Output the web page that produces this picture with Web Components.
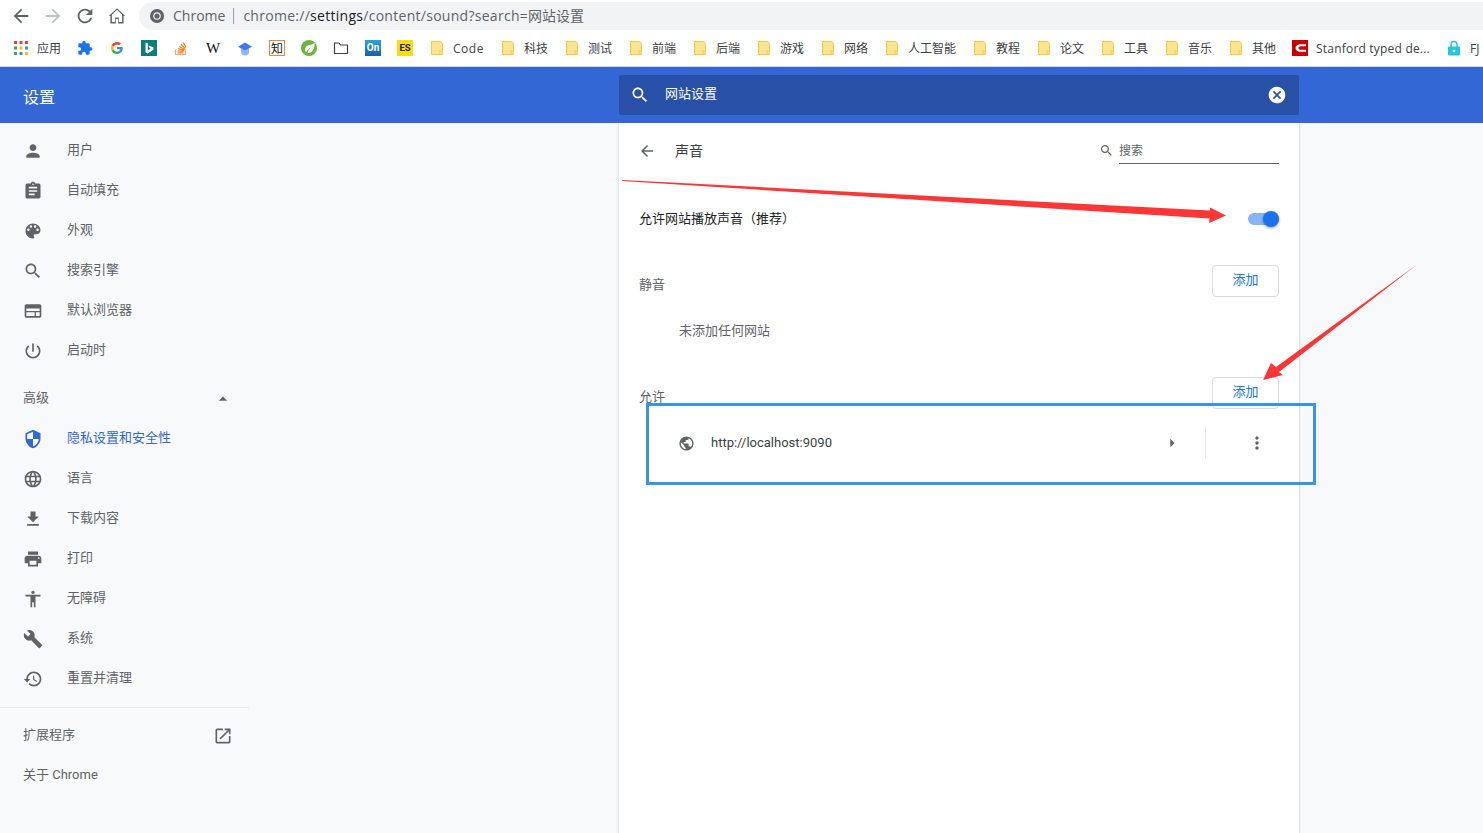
<!DOCTYPE html>
<html lang="zh-CN"><head><meta charset="utf-8"><title>设置</title>
<style>
html,body{margin:0;padding:0;background:#f8f9fa}
body{width:1483px;height:833px;overflow:hidden;position:relative;font-family:Roboto,"Noto Sans CJK SC",sans-serif;font-size:13px;color:#5f6368}
</style></head><body>
<x-toolbar></x-toolbar>
<x-bookmarks>
  <x-bm icon="apps">应用</x-bm><x-bm icon="ext"></x-bm><x-bm icon="g"></x-bm><x-bm icon="bing"></x-bm><x-bm icon="so"></x-bm><x-bm icon="w"></x-bm><x-bm icon="hat"></x-bm><x-bm icon="zhi"></x-bm><x-bm icon="spring"></x-bm><x-bm icon="dir"></x-bm><x-bm icon="on"></x-bm><x-bm icon="es"></x-bm>
  <x-bm style="letter-spacing:.5px">Code</x-bm><x-bm>科技</x-bm><x-bm>测试</x-bm><x-bm>前端</x-bm><x-bm>后端</x-bm><x-bm>游戏</x-bm><x-bm>网络</x-bm><x-bm>人工智能</x-bm><x-bm>教程</x-bm><x-bm>论文</x-bm><x-bm>工具</x-bm><x-bm>音乐</x-bm><x-bm>其他</x-bm>
  <x-bm icon="c" style="letter-spacing:.2px">Stanford typed de...</x-bm><x-bm icon="lock">FJ</x-bm>
</x-bookmarks>
<x-settings-header></x-settings-header>
<x-layout>
  <x-sidebar slot="side">
    <x-nav icon="person">用户</x-nav><x-nav icon="assign">自动填充</x-nav><x-nav icon="palette">外观</x-nav><x-nav icon="search">搜索引擎</x-nav><x-nav icon="web">默认浏览器</x-nav><x-nav icon="power">启动时</x-nav>
    <x-nav plain trail="caret" style="margin-top:8px">高级</x-nav>
    <x-nav icon="shield" active>隐私设置和安全性</x-nav><x-nav icon="language">语言</x-nav><x-nav icon="download">下载内容</x-nav><x-nav icon="print">打印</x-nav><x-nav icon="access">无障碍</x-nav><x-nav icon="build">系统</x-nav><x-nav icon="restore">重置并清理</x-nav>
    <x-rule></x-rule>
    <x-nav plain trail="open">扩展程序</x-nav><x-nav plain>关于 Chrome</x-nav>
  </x-sidebar>
  <x-card slot="main">
    <x-subpage></x-subpage>
    <x-toggle-row>允许网站播放声音<span style="font-family:'Noto Sans CJK TC',sans-serif">（</span>推荐<span style="font-family:'Noto Sans CJK TC',sans-serif">）</span></x-toggle-row>
    <x-section>静音</x-section>
    <x-empty>未添加任何网站</x-empty>
    <x-section>允许</x-section>
    <x-site>http://localhost:9090</x-site>
  </x-card>
</x-layout>
<x-annotations></x-annotations>
<script>
const P={
person:'M12 12c2.21 0 4-1.79 4-4s-1.79-4-4-4-4 1.79-4 4 1.79 4 4 4zm0 2c-2.67 0-8 1.34-8 4v2h16v-2c0-2.66-5.33-4-8-4z',
assign:'M19 3h-4.18C14.4 1.84 13.3 1 12 1c-1.3 0-2.4.84-2.82 2H5c-1.1 0-2 .9-2 2v14c0 1.1.9 2 2 2h14c1.1 0 2-.9 2-2V5c0-1.1-.9-2-2-2zm-7 0c.55 0 1 .45 1 1s-.45 1-1 1-1-.45-1-1 .45-1 1-1zm2 14H7v-2h7v2zm3-4H7v-2h10v2zm0-4H7V7h10v2z',
palette:'M12 3c-4.97 0-9 4.03-9 9s4.03 9 9 9c.83 0 1.5-.67 1.5-1.5 0-.39-.15-.74-.39-1.01-.23-.26-.38-.61-.38-.99 0-.83.67-1.5 1.5-1.5H16c2.76 0 5-2.24 5-5 0-4.42-4.03-8-9-8zm-5.5 9c-.83 0-1.5-.67-1.5-1.5S5.67 9 6.5 9 8 9.67 8 10.5 7.33 12 6.5 12zm3-4C8.67 8 8 7.33 8 6.5S8.67 5 9.5 5s1.5.67 1.5 1.5S10.33 8 9.5 8zm5 0c-.83 0-1.5-.67-1.5-1.5S13.67 5 14.5 5s1.5.67 1.5 1.5S15.33 8 14.5 8zm3 4c-.83 0-1.5-.67-1.5-1.5S16.67 9 17.5 9s1.5.67 1.5 1.5-.67 1.5-1.5 1.5z',
search:'M15.5 14h-.79l-.28-.27C15.41 12.59 16 11.11 16 9.5 16 5.91 13.09 3 9.5 3S3 5.91 3 9.5 5.91 16 9.5 16c1.61 0 3.09-.59 4.23-1.57l.27.28v.79l5 4.99L20.49 19l-4.99-5zm-6 0C7.01 14 5 11.99 5 9.5S7.01 5 9.5 5 14 7.01 14 9.5 11.99 14 9.5 14z',
web:'M20 4H4c-1.1 0-2 .9-2 2v12c0 1.1.9 2 2 2h16c1.1 0 2-.9 2-2V6c0-1.1-.9-2-2-2zM4 9h16v3H4V9zm0 4.5h10V18H4v-4.5zm11.5 0H20V18h-4.5v-4.5z',
power:'M13 3h-2v10h2V3zm4.83 2.17l-1.42 1.42C17.99 7.86 19 9.81 19 12c0 3.87-3.13 7-7 7s-7-3.13-7-7c0-2.19 1.01-4.14 2.58-5.42L6.17 5.17C4.23 6.82 3 9.26 3 12c0 4.97 4.03 9 9 9s9-4.03 9-9c0-2.74-1.23-5.18-3.17-6.83z',
shield:'M12 1L3 5v6c0 5.55 3.84 10.74 9 12 5.16-1.26 9-6.45 9-12V5l-9-4zm0 10.99h7c-.53 4.12-3.28 7.79-7 8.94V12H5V6.3l7-3.11v8.8z',
language:'M11.99 2C6.47 2 2 6.48 2 12s4.47 10 9.99 10C17.52 22 22 17.52 22 12S17.52 2 11.99 2zm6.93 6h-2.95c-.32-1.25-.78-2.45-1.38-3.56 1.84.63 3.37 1.91 4.33 3.56zM12 4.04c.83 1.2 1.48 2.53 1.91 3.96h-3.82c.43-1.43 1.08-2.76 1.91-3.96zM4.26 14C4.1 13.36 4 12.69 4 12s.1-1.36.26-2h3.38c-.08.66-.14 1.32-.14 2 0 .68.06 1.34.14 2H4.26zm.82 2h2.95c.32 1.25.78 2.45 1.38 3.56-1.84-.63-3.37-1.9-4.33-3.56zm2.95-8H5.08c.96-1.66 2.49-2.93 4.33-3.56C8.81 5.55 8.35 6.75 8.03 8zM12 19.96c-.83-1.2-1.48-2.53-1.91-3.96h3.82c-.43 1.43-1.08 2.76-1.91 3.96zM14.34 14H9.66c-.09-.66-.16-1.32-.16-2 0-.68.07-1.35.16-2h4.68c.09.65.16 1.32.16 2 0 .68-.07 1.34-.16 2zm.25 5.56c.6-1.11 1.06-2.31 1.38-3.56h2.95c-.96 1.65-2.49 2.93-4.33 3.56zM16.36 14c.08-.66.14-1.32.14-2 0-.68-.06-1.34-.14-2h3.38c.16.64.26 1.31.26 2s-.1 1.36-.26 2h-3.38z',
download:'M19 9h-4V3H9v6H5l7 7 7-7zM5 18v2h14v-2H5z',
print:'M19 8H5c-1.66 0-3 1.34-3 3v6h4v4h12v-4h4v-6c0-1.66-1.34-3-3-3zm-3 11H8v-5h8v5zm3-7c-.55 0-1-.45-1-1s.45-1 1-1 1 .45 1 1-.45 1-1 1zm-1-9H6v4h12V3z',
access:'M12 2c1.1 0 2 .9 2 2s-.9 2-2 2-2-.9-2-2 .9-2 2-2zm9 7h-6v13h-2v-6h-2v6H9V9H3V7h18v2z',
build:'M22.7 19l-9.1-9.1c.9-2.3.4-5-1.5-6.9-2-2-5-2.4-7.4-1.3L9 6 6 9 1.6 4.7C.4 7.1.9 10.1 2.9 12.1c1.9 1.9 4.6 2.4 6.9 1.5l9.1 9.1c.4.4 1 .4 1.4 0l2.3-2.3c.5-.4.5-1.1.1-1.4z',
restore:'M13 3c-4.97 0-9 4.03-9 9H1l3.89 3.89.07.14L9 12H6c0-3.87 3.13-7 7-7s7 3.13 7 7-3.13 7-7 7c-1.93 0-3.68-.79-4.94-2.06l-1.42 1.42C8.27 19.99 10.51 21 13 21c4.97 0 9-4.03 9-9s-4.03-9-9-9zm-1 5v5l4.28 2.54.72-1.21-3.5-2.08V8H12z',
open:'M19 19H5V5h7V3H5c-1.11 0-2 .9-2 2v14c0 1.1.89 2 2 2h14c1.1 0 2-.9 2-2v-7h-2v7zM14 3v2h3.59l-9.83 9.83 1.41 1.41L19 6.41V10h2V3h-7z',
caret:'M7 14l5-5 5 5z',
right:'M10 7l5 5-5 5z',
pub:'M12 2C6.48 2 2 6.48 2 12s4.48 10 10 10 10-4.48 10-10S17.52 2 12 2zm-1 17.93c-3.95-.49-7-3.85-7-7.93 0-.62.08-1.21.21-1.79L9 15v1c0 1.1.9 2 2 2v1.93zm6.9-2.54c-.26-.81-1-1.39-1.9-1.39h-1v-3c0-.55-.45-1-1-1H8v-2h2c.55 0 1-.45 1-1V7h2c1.1 0 2-.9 2-2v-.41c2.93 1.19 5 4.06 5 7.41 0 2.08-.8 3.97-2.1 5.39z',
back:'M20 11H7.83l5.59-5.59L12 4l-8 8 8 8 1.41-1.41L7.83 13H20v-2z',
forward:'M12 4l-1.41 1.41L16.17 11H4v2h12.17l-5.58 5.59L12 20l8-8z',
cancel:'M12 2C6.47 2 2 6.47 2 12s4.47 10 10 10 10-4.47 10-10S17.53 2 12 2zm5 13.59L15.59 17 12 13.41 8.41 17 7 15.59 10.59 12 7 8.41 8.41 7 12 10.59 15.59 7 17 8.41 13.41 12 17 15.59z',
more:'M12 8c1.1 0 2-.9 2-2s-.9-2-2-2-2 .9-2 2 .9 2 2 2zm0 2c-1.1 0-2 .9-2 2s.9 2 2 2 2-.9 2-2-.9-2-2-2zm0 6c-1.1 0-2 .9-2 2s.9 2 2 2 2-.9 2-2-.9-2-2-2z',
refresh:'M17.65 6.35C16.2 4.9 14.21 4 12 4c-4.42 0-7.99 3.58-7.99 8s3.57 8 7.99 8c3.73 0 6.84-2.55 7.73-6h-2.08c-.82 2.33-3.04 4-5.65 4-3.31 0-6-2.69-6-6s2.69-6 6-6c1.66 0 3.14.69 4.22 1.78L13 11h7V4l-2.35 2.35z',
home:'M12 3.800L5.200 10.200V20h4.300v-6h5v6h4.300V10.200zM12 1.500L1 12h2.200v10h7.300v-6h3v6h7.300V12H23z',
ext:'M20.5 11H19V7c0-1.1-.9-2-2-2h-4V3.5C13 2.12 11.88 1 10.5 1S8 2.12 8 3.5V5H4c-1.1 0-1.99.9-1.99 2v3.8H3.5c1.49 0 2.7 1.21 2.7 2.7s-1.21 2.7-2.7 2.7H2V20c0 1.1.9 2 2 2h3.8v-1.5c0-1.49 1.21-2.7 2.7-2.7 1.49 0 2.7 1.21 2.7 2.7V22H17c1.1 0 2-.9 2-2v-4h1.5c1.38 0 2.5-1.12 2.5-2.5S21.88 11 20.5 11z'
};
const ico=(n,s,c='currentColor')=>`<svg width="${s}" height="${s}" viewBox="0 0 24 24" fill="${c}" fill-rule="evenodd" style="display:block;flex:none"><path d="${P[n]}"/></svg>`;
const BM={
folder:`<svg width="16" height="16" viewBox="0 0 16 16"><path d="M2.5 1.500h9l2 2v11h-11z" fill="#fee591" stroke="#f2c744"/><rect x="11" y="11" width="2.5" height="3.500" fill="#fee591" stroke="#f2c744" stroke-width=".8"/></svg>`,
apps:`<svg width="16" height="16" viewBox="0 0 16 16"><g><rect x="1" y="1" width="3" height="3" fill="#ea4335"/><rect x="6.500" y="1" width="3" height="3" fill="#ea4335"/><rect x="12" y="1" width="3" height="3" fill="#ea4335"/><rect x="1" y="6.500" width="3" height="3" fill="#34a853"/><rect x="6.500" y="6.500" width="3" height="3" fill="#fbbc05"/><rect x="12" y="6.500" width="3" height="3" fill="#4285f4"/><rect x="1" y="12" width="3" height="3" fill="#34a853"/><rect x="6.500" y="12" width="3" height="3" fill="#4285f4"/><rect x="12" y="12" width="3" height="3" fill="#fbbc05"/></g></svg>`,
ext:`<svg width="16" height="16" viewBox="0 0 24 24" fill="#1a73e8"><path d="${P.ext}"/></svg>`,
g:`<svg width="16" height="16" viewBox="-8 -8 64 64"><path fill="#ea4335" d="M24 9.500c3.500 0 6.700 1.300 9.100 3.400l6.800-6.800C35.800 2.400 30.200 0 24 0 14.600 0 6.500 5.400 2.600 13.200l7.900 6.100C12.400 13.500 17.700 9.500 24 9.500z"/><path fill="#4285f4" d="M47 24.500c0-1.600-.1-3.100-.4-4.500H24v9h13c-.6 3-2.300 5.500-4.800 7.200l7.700 6C44.400 38 47 31.800 47 24.500z"/><path fill="#fbbc05" d="M10.500 28.700A14.400 14.400 0 0 1 10.500 19.300l-7.900-6.100a24 24 0 0 0 0 21.600z"/><path fill="#34a853" d="M24 48c6.500 0 11.900-2.100 15.900-5.800l-7.700-6c-2.200 1.500-5 2.300-8.200 2.300-6.300 0-11.600-4-13.500-9.800l-7.900 6.100C6.500 42.600 14.600 48 24 48z"/></svg>`,
bing:`<svg width="16" height="16" viewBox="0 0 16 16"><rect width="16" height="16" fill="#0b7f77"/><path d="M4.500 2.500l2.300.8v6.900l3-1.700-1.500-.7-.9-2.200 5 1.700v2.500L6.800 13.500l-2.300-1.300z" fill="#fff"/></svg>`,
so:`<svg width="16" height="16" viewBox="0 0 16 16"><path d="M2.500 9.500v5h10v-5" fill="none" stroke="#f2a76d" stroke-width="1.200"/><g stroke="#f48024" stroke-width="1.300"><path d="M4.500 12.800h6M4.600 10.800l6 .6M5.200 8.700l5.800 1.700M6.300 6.500l5.200 3M8 4.300l4.200 4.300M10.400 2.500l2.600 5"/></g></svg>`,
w:`<span style="font:400 15px 'Liberation Serif',serif;color:#111;line-height:16px;display:block;width:16px;text-align:center">W</span>`,
hat:`<svg width="16" height="16" viewBox="0 0 16 16"><path d="M4 8h8v3.500a4 4 0 0 1-8 0z" fill="#8fb3fb"/><path d="M8 2.500l7 4.300-7 3.700-7-3.700z" fill="#3f7be8"/></svg>`,
zhi:`<span style="display:block;box-sizing:border-box;width:16px;height:16px;border:1px solid #f0853a;font:400 12px/14px 'Noto Sans CJK SC',sans-serif;color:#111;text-align:center;overflow:hidden">知</span>`,
spring:`<svg width="16" height="16" viewBox="0 0 16 16"><circle cx="8" cy="8" r="8" fill="#6db33f"/><path d="M13.500 2.500c-.6 1-1.500 1.700-2.700 2.100C8 5 4 6 4 9.500c0 1.300.5 2.200 1.200 2.800 1-2.500 3-4 5-5-1.800 1.500-3 3-3.600 5.500 4 .8 7.500-3.500 6.900-10.300z" fill="#fff"/></svg>`,
dir:`<svg width="16" height="16" viewBox="0 0 16 16"><path d="M1.500 13.500v-10.500h4.500l1.500 2h7v8.500z" fill="none" stroke="#3c4043" stroke-width="1.200"/></svg>`,
on:`<span style="display:block;width:16px;height:16px;background:linear-gradient(#2fa3d6,#1a5ea6);color:#fff;font:700 10px/16px Roboto,sans-serif;text-align:center">On</span>`,
es:`<span style="display:block;width:16px;height:16px;background:#f8dc14;color:#222;font:700 9.500px/16px Roboto,sans-serif;text-align:center">ES</span>`,
c:`<svg width="16" height="16" viewBox="0 0 16 16"><rect width="16" height="16" fill="#c80000"/><path d="M14 4.200H8.500C5.500 4.200 3.500 6 3.500 8s2 3.800 5 3.800H14V9.800H9c-1.500 0-2.500-.8-2.500-1.800S7.500 6.200 9 6.200h5z" fill="#fff"/></svg>`,
lock:`<svg width="16" height="16" viewBox="0 0 16 16"><path d="M5 7V4.500a3 3 0 0 1 6 0V7" fill="none" stroke="#26c6da" stroke-width="1.500"/><rect x="2" y="6.500" width="12" height="9" rx="1" fill="#26c6da"/><circle cx="8" cy="11" r="1.300" fill="#fff"/></svg>`
};
function def(name,html,init){
  customElements.define(name,class extends HTMLElement{
    constructor(){super();this.attachShadow({mode:'open'});}
    connectedCallback(){this.shadowRoot.innerHTML=typeof html==='function'?html(this):html;if(init)init(this);}
  });
}
def('x-toolbar',`<style>
:host{display:flex;align-items:center;height:30px;background:#fff;padding-left:10px;box-sizing:border-box;overflow:hidden;color:#5f6368}
.n{display:flex;gap:10px;margin-right:11px}
.a{flex:1;margin-right:-20px;height:28px;margin-top:2px;background:#f1f3f4;border-radius:14px;display:flex;align-items:center;padding-left:11px;font:14px/28px "Open Sans","Noto Sans CJK SC",sans-serif;white-space:nowrap}
.s{width:1px;height:16px;background:#9aa0a6;margin:0 9.500px 0 7.500px}
b{font-weight:400;color:#202124}
.l{letter-spacing:.28px}.z{letter-spacing:0}
.site{margin-right:9px;display:block}
.n svg{margin-top:2px}
.n svg:last-child{width:18px;height:18px;margin:4px 2px 2px}
</style><div class="n">${ico('back',22)}${ico('forward',22,'#bdc1c6')}${ico('refresh',22)}${ico('home',22)}</div>
<div class="a"><svg class="site" width="14" height="14" viewBox="0 0 14 14"><circle cx="7" cy="7" r="7" fill="#5f6368"/><circle cx="7" cy="7" r="3.800" fill="#f1f3f4"/><circle cx="7" cy="7" r="2.600" fill="#5f6368"/></svg><span>Chrome</span><span class="s"></span><span class="l">chrome://<b>settings</b>/content/sound?search=<span class="z">网站设置</span></span></div>`);
def('x-bookmarks',`<style>:host{display:flex;gap:16px;align-items:center;height:37px;box-sizing:border-box;background:#fff;padding:0 0 0 13px;border-bottom:1px solid #d3d6da;overflow:hidden;white-space:nowrap}</style><slot></slot>`);
def('x-bm',el=>{const k=el.getAttribute('icon')||'folder';const t=el.textContent.trim();return `<style>:host{display:flex;align-items:center;gap:8px;flex:none;font:12px/16px "Open Sans","Noto Sans CJK SC",sans-serif;color:#3c4043}
i{display:block;width:16px;height:16px;flex:none;font-style:normal;letter-spacing:0}svg{display:block}.t{padding-top:2px}</style><i>${BM[k]}</i>${t?'<span class="t"><slot></slot></span>':''}`});
def('x-settings-header',`<style>
:host{display:grid;position:relative;z-index:1;grid-template-columns:250px 369px 680px;height:56px;background:#3367d6;color:#fff;align-items:center}
h1{margin:0;padding:6px 0 0 23px;font:400 16px/24px Roboto,"Noto Sans CJK SC",sans-serif;grid-column:1}
.s{grid-column:3;height:40px;background:#2850a7;border-radius:2px;display:flex;align-items:center;padding:0 12px 0 11px;font:13px/20px Roboto,"Noto Sans CJK SC",sans-serif}
.t{flex:1;margin-left:15px;margin-top:-2px}
</style><h1>设置</h1><div class="s">${ico('search',20)}<span class="t">网站设置</span>${ico('cancel',20)}</div>`);
def('x-layout',`<style>:host{display:grid;grid-template-columns:250px 369px 680px;height:710px}
::slotted([slot=main]){grid-column:3}</style><slot name="side"></slot><slot name="main"></slot>`);
def('x-sidebar',`<style>:host{display:block;padding-top:8px;grid-column:1}</style><slot></slot>`);
def('x-rule',`<style>:host{display:block;height:1px;background:#e4e6e8;margin:8px 1px 8px 0}</style>`);
def('x-nav',el=>{const a=el.hasAttribute('active'),ic=el.getAttribute('icon'),tr=el.getAttribute('trail');
 return `<style>:host{display:flex;align-items:center;height:40px;padding:0 17px 0 23px;font:13px/20px Roboto,"Noto Sans CJK SC",sans-serif;color:${a?'#3367d6':'#5f6368'}}
 .i{width:20px;margin-right:24px}.t{flex:1;margin-top:-2px}</style>${ic?`<span class="i">${ico(ic,20)}</span>`:''}<span class="t"><slot></slot></span>${tr?ico(tr,20):''}`});
def('x-card',`<style>:host{display:block;background:#fff;box-shadow:0 0 0 1px #e3e5e8,1px 0 2px #dfe1e5,-1px 0 2px #dfe1e5;padding:0 20px;height:710px;box-sizing:border-box;font:13px/20px Roboto,"Noto Sans CJK SC",sans-serif}</style><slot></slot>`);
def('x-subpage',`<style>:host{display:flex;align-items:center;height:56px;color:#5f6368}
.t{font-size:14px;margin-left:18px;flex:1;color:#3c4043}
.b{margin-left:-1px;width:19px}
.q{font-size:12px;width:160px;height:24px;line-height:22px;box-sizing:border-box;border-bottom:1px solid #5f6368;margin-top:2px;margin-left:5px;color:#5f6368}
.g{margin-top:-2px}
</style><span class="b">${ico('back',18)}</span><span class="t">声音</span><span class="g">${ico('search',15)}</span><span class="q">搜索</span>`);
def('x-toggle-row',`<style>:host{display:flex;align-items:center;justify-content:space-between;height:56px;margin-top:12px;color:#202124;margin-bottom:18px}
.x{margin-top:-2px}
.k{position:relative;display:block;width:31px;height:12px;background:#8ab4f8;border-radius:6px}
.k::after{content:"";position:absolute;right:0;top:-2px;width:16px;height:16px;border-radius:50%;background:#1a73e8;box-shadow:0 1px 3px rgba(0,0,0,.4)}
</style><span class="x"><slot></slot></span><span class="k"></span>`);
def('x-section',`<style>:host{display:flex;justify-content:space-between;align-items:center;height:32px;color:#5f6368}
.l{padding-top:8px}
button{all:unset;box-sizing:border-box;width:67px;height:32px;padding-bottom:2px;border:1px solid #dadce0;border-radius:4px;text-align:center;color:#1a73e8;font:13px/20px Roboto,"Noto Sans CJK SC",sans-serif;background:#fff}
</style><span class="l"><slot></slot></span><button>添加</button>`);
def('x-empty',`<style>:host{display:flex;align-items:center;height:40px;padding-left:40px;margin:14px 0 26px;color:#5f6368}</style><slot></slot>`);
def('x-site',`<style>:host{display:flex;align-items:center;height:44px;margin-top:12px;padding-left:39px;color:#3c4043;font-size:13px}
.t{flex:1;margin-left:16px}
.a{color:#5f6368;margin-right:23px}
.s{width:1px;height:32px;background:#e8eaed;margin-right:41px}
.m{color:#5f6368;margin-right:12px}
</style>${ico('pub',17,'#5f6368')}<span class="t"><slot></slot></span><span class="a">${ico('right',20)}</span><span class="s"></span><span class="m">${ico('more',20)}</span>`);
def('x-annotations',`<style>:host{position:absolute;left:0;top:0;width:1483px;height:833px;z-index:2;pointer-events:none}svg{display:block}</style>
<svg width="1483" height="833" viewBox="0 0 1483 833">
<path d="M622 180L622 181L1209.500 218.500L1209 223L1226 215.500L1210 207.500L1210 210.500z" fill="#fb3636"/>
<path d="M1415 266L1414.500 266.500L1279 372L1283 375L1263 380L1271 363L1276 367L1415 266z" fill="#fb3636"/>
<rect x="647.500" y="404.500" width="667" height="79" fill="none" stroke="#3a94e6" stroke-width="3"/>
</svg>`);
</script>
</body></html>
